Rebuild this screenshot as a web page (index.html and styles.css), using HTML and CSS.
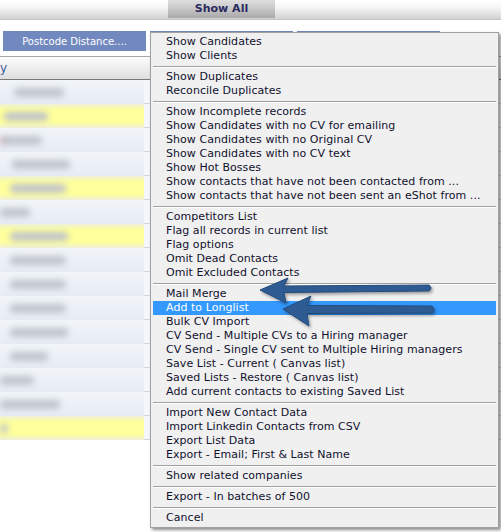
FILE: index.html
```html
<!DOCTYPE html>
<html lang="en">
<head>
    <meta charset="UTF-8">
    <title>Contacts</title>
    <link rel="stylesheet" href="styles.css">
</head>
<body>

    <div class="topbar">
        <div class="tab-show-all">Show All</div>
    </div>

    <div class="toolbar">
        <button class="tool-btn">Postcode Distance....</button>
        <button class="tool-btn"></button>
        <button class="tool-btn"></button>
    </div>

    <div class="grid">
        <div class="grid-head"><span class="col-title">y</span></div>
        <div class="grid-body">
            <div class="grid-row"><div class="cell-main"><span class="blob" style="margin-left:14px;width:50px"></span></div><div class="cell-next"></div></div>
            <div class="grid-row flagged"><div class="cell-main"><span class="blob" style="margin-left:4px;width:44px"></span></div><div class="cell-next"></div></div>
            <div class="grid-row"><div class="cell-main"><span class="blob pinkish" style="margin-left:0;width:42px"></span></div><div class="cell-next"></div></div>
            <div class="grid-row"><div class="cell-main"><span class="blob" style="margin-left:12px;width:58px"></span></div><div class="cell-next"></div></div>
            <div class="grid-row flagged"><div class="cell-main"><span class="blob" style="margin-left:10px;width:56px"></span></div><div class="cell-next"></div></div>
            <div class="grid-row"><div class="cell-main"><span class="blob" style="margin-left:0;width:30px"></span></div><div class="cell-next"></div></div>
            <div class="grid-row flagged"><div class="cell-main"><span class="blob" style="margin-left:10px;width:58px"></span></div><div class="cell-next"></div></div>
            <div class="grid-row"><div class="cell-main"><span class="blob" style="margin-left:10px;width:56px"></span></div><div class="cell-next"></div></div>
            <div class="grid-row"><div class="cell-main"><span class="blob" style="margin-left:10px;width:56px"></span></div><div class="cell-next"></div></div>
            <div class="grid-row"><div class="cell-main"><span class="blob" style="margin-left:10px;width:56px"></span></div><div class="cell-next"></div></div>
            <div class="grid-row"><div class="cell-main"><span class="blob" style="margin-left:10px;width:58px"></span></div><div class="cell-next"></div></div>
            <div class="grid-row"><div class="cell-main"><span class="blob" style="margin-left:10px;width:38px"></span></div><div class="cell-next"></div></div>
            <div class="grid-row"><div class="cell-main"><span class="blob" style="margin-left:0;width:34px"></span></div><div class="cell-next"></div></div>
            <div class="grid-row"><div class="cell-main"><span class="blob" style="margin-left:0;width:60px"></span></div><div class="cell-next"></div></div>
            <div class="grid-row flagged"><div class="cell-main"><span class="blob" style="margin-left:0;width:8px"></span></div><div class="cell-next"></div></div>
        </div>
    </div>

    <ul class="context-menu">
        <li>Show Candidates</li>
        <li>Show Clients</li>
        <li class="sep"></li>
        <li>Show Duplicates</li>
        <li>Reconcile Duplicates</li>
        <li class="sep"></li>
        <li>Show Incomplete records</li>
        <li>Show Candidates with no CV for emailing</li>
        <li>Show Candidates with no Original CV</li>
        <li>Show Candidates with no CV text</li>
        <li>Show Hot Bosses</li>
        <li>Show contacts that have not been contacted from ...</li>
        <li>Show contacts that have not been sent an eShot from ...</li>
        <li class="sep"></li>
        <li>Competitors List</li>
        <li>Flag all records in current list</li>
        <li>Flag options</li>
        <li>Omit Dead Contacts</li>
        <li>Omit Excluded Contacts</li>
        <li class="sep"></li>
        <li>Mail Merge</li>
        <li class="active">Add to Longlist</li>
        <li>Bulk CV Import</li>
        <li>CV Send - Multiple CVs to a Hiring manager</li>
        <li>CV Send - Single CV sent to Multiple Hiring managers</li>
        <li>Save List - Current ( Canvas list)</li>
        <li>Saved Lists - Restore ( Canvas list)</li>
        <li>Add current contacts to existing Saved List</li>
        <li class="sep"></li>
        <li>Import New Contact Data</li>
        <li>Import Linkedin Contacts from CSV</li>
        <li>Export List Data</li>
        <li>Export - Email; First &amp; Last Name</li>
        <li class="sep"></li>
        <li>Show related companies</li>
        <li class="sep"></li>
        <li>Export - In batches of 500</li>
        <li class="sep"></li>
        <li>Cancel</li>
    </ul>

    <!-- callout arrows drawn over the menu -->
    <svg class="arrows" width="501" height="532" viewBox="0 0 501 532">
        <defs>
            <filter id="arrow-shadow" x="-10%" y="-50%" width="130%" height="250%">
                <feDropShadow dx="1.5" dy="2" stdDeviation="1.5" flood-color="#000" flood-opacity="0.35"/>
            </filter>
        </defs>
        <path d="M260 290 L288 278 L284 286 L429 285 Q433 288 429 291 L284 292.5 L286 303 Z" class="arrow"/>
        <path d="M283 309 L311 296 L307 305.5 L432 306 Q436 309.5 432 313 L307 313.5 L309 326 Z" class="arrow"/>
    </svg>

</body>
</html>
```

FILE: styles.css
```css
body {
    margin: 0;
    width: 501px;
    height: 532px;
    overflow: hidden;
    position: relative;
    background-color: #fff;
    font-family: "DejaVu Sans", Verdana, sans-serif;
    font-size: 11px;
}
.topbar {
    height: 19px;
    padding-left: 168px;
    border-bottom: 1px solid #c6c6c6;
    background: linear-gradient(#ffffff, #f8f8f8 35%, #d2d2d2);
}
.tab-show-all {
    width: 107px;
    height: 18px;
    line-height: 18px;
    text-align: center;
    font-size: 11px;
    font-weight: bold;
    color: #2a2a5e;
    background: linear-gradient(#dedede, #c6c6c6 50%, #a9a9a9);
}
.toolbar {
    display: flex;
    gap: 4px;
    padding: 11px 0 0 3px;
}
.tool-btn {
    width: 143px;
    height: 20px;
    padding: 0;
    border: none;
    background-color: #7289c0;
    color: #fff;
    font-family: "DejaVu Sans", Verdana, sans-serif;
    font-size: 10px;
}
.grid {
    margin-top: 5px;
}
.grid-head {
    height: 22px;
    display: flex;
    align-items: center;
    border-top: 1px solid #a8a8a8;
    border-bottom: 1px solid #7a7a7a;
    background: linear-gradient(#fdfdfd, #dedede);
    color: #3a5e9e;
    font-size: 12px;
}
.grid-row {
    display: flex;
    height: 24px;
}
.cell-main {
    width: 144px;
    display: flex;
    align-items: center;
    background: linear-gradient(#f1f5fa, #e7ecf3);
}
.grid-row.flagged .cell-main {
    background: linear-gradient(#eef0d8, #ffff9c 25%, #ffff9c 75%, #eef0d8);
}
.cell-next {
    flex: 1;
    box-sizing: border-box;
    border-bottom: 1px solid #d2d6dc;
    background-color: #f4f6fa;
}
.blob {
    height: 9px;
    border-radius: 4px;
    background-color: #c0c4cb;
    filter: blur(3px);
}
.blob.pinkish {
    background: linear-gradient(90deg, #c79aa8, #c0c4cb 15%);
}
.context-menu {
    position: absolute;
    left: 150px;
    top: 32px;
    width: 343px;
    margin: 0;
    padding: 2px;
    list-style: none;
    background-color: #f0f0f0;
    border: 1px solid #a0a0a0;
    box-shadow: 2px 2px 3px rgba(0,0,0,0.45);
    color: #10102e;
}
.context-menu li {
    height: 14px;
    line-height: 14px;
    padding-left: 13px;
    white-space: nowrap;
    letter-spacing: 0.05px;
}
.context-menu li.active {
    background-color: #3399ff;
    color: #fff;
}
.context-menu li.sep {
    height: 1px;
    margin: 3px 0 2px;
    padding: 0;
    border-top: 1px solid #a0a0a0;
    background-color: #fff;
}
.arrows {
    position: absolute;
    left: 0;
    top: 0;
    pointer-events: none;
}
.arrow {
    fill: #2f5c92;
    stroke: #234a7a;
    stroke-width: 1;
    filter: url(#arrow-shadow);
}
```
